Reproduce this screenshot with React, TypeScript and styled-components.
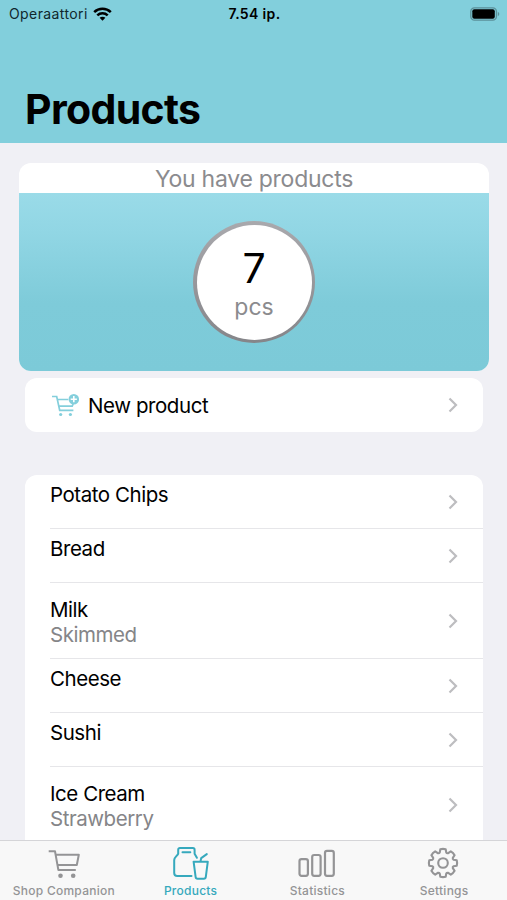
import React from "react";
import styled, { createGlobalStyle } from "styled-components";

const GlobalStyle = createGlobalStyle`
  * { box-sizing: border-box; }
  body {
    margin: 0;
    background: #f0f0f5;
    font-family: Inter, "Liberation Sans", sans-serif;
    color: #000;
  }
`;

const Screen = styled.div`
  display: flex;
  flex-direction: column;
  height: 900px;
  overflow: hidden;
`;

const Header = styled.header`
  flex: none;
  height: 143px;
  background: #82cfdc;
`;

const StatusBar = styled.div`
  display: grid;
  grid-template-columns: 1fr auto 1fr;
  align-items: center;
  height: 27px;
  padding: 0 7px 0 9px;
  font-size: 14px;
  svg { display: block; }
`;

const Carrier = styled.span`
  display: flex;
  align-items: center;
  gap: 5px;
  color: #10272c;
  letter-spacing: 0.4px;
`;

const Clock = styled.span`
  font-weight: 600;
  letter-spacing: 0.35px;
`;

const BatterySlot = styled.span`
  justify-self: end;
`;

const Title = styled.h1`
  margin: 57px 0 0 25px;
  font-size: 41px;
  line-height: 50px;
  font-weight: 700;
  letter-spacing: -0.65px;
`;

const Content = styled.main`
  flex: 1;
  min-height: 0;
  overflow: hidden;
  padding: 20px 19px 0;
`;

const Summary = styled.section`
  height: 208px;
  width: 470px;
  border-radius: 12px;
  overflow: hidden;
  background: #fff;
`;

const SummaryTitle = styled.div`
  height: 30px;
  line-height: 32px;
  text-align: center;
  font-size: 23px;
  letter-spacing: -0.26px;
  color: #8b8b8e;
`;

const SummaryBody = styled.div`
  height: 178px;
  display: flex;
  align-items: center;
  justify-content: center;
  background: linear-gradient(#9adbe8 0%, #91d6e4 22%, #7ecbd9 62%, #7ccad8 100%);
`;

const Ring = styled.div`
  width: 122px;
  height: 122px;
  padding: 3.5px;
  border-radius: 50%;
  background: linear-gradient(#a9a9ad, #858589);
`;

const Disc = styled.div`
  height: 100%;
  border-radius: 50%;
  background: #fff;
  text-align: center;
  padding-top: 20px;
`;

const Count = styled.div`
  font-size: 41px;
  line-height: 46px;
`;

const Unit = styled.div`
  font-size: 23px;
  line-height: 32px;
  color: #8b8b8e;
`;

const Card = styled.section<{ $gap: number }>`
  margin: ${(p) => p.$gap}px 6px 0;
  width: 458px;
  border-radius: 12px;
  background: #fff;
  overflow: hidden;
`;

const ProductList = styled(Card)`
  border-radius: 12px 12px 0 0;
`;

const ActionRow = styled.div`
  height: 54px;
  padding: 0 25px 0 27px;
  display: flex;
  align-items: center;
  font-size: 20.5px;
  letter-spacing: -0.42px;
  svg { display: block; flex: none; }
`;

const ActionLabel = styled.span`
  flex: 1;
  margin-left: 9px;
`;

const ProductRow = styled.div<{ $tall: boolean }>`
  height: ${(p) => (p.$tall ? 76 : 54)}px;
  margin-left: 25px;
  padding-right: 25px;
  display: flex;
  align-items: center;
  justify-content: space-between;
  border-bottom: 1px solid #e6e6e9;
`;

const ProductText = styled.div<{ $tall: boolean }>`
  align-self: flex-start;
  padding-top: ${(p) => (p.$tall ? 14 : 7)}px;
  font-size: 20.5px;
  line-height: 25px;
  letter-spacing: -0.45px;
`;

const Variant = styled.div`
  color: #858588;
`;

const TabBar = styled.nav`
  flex: none;
  height: 60px;
  border-top: 1px solid #d5d5d8;
  background: #f8f8f8;
  display: grid;
  grid-template-columns: repeat(4, 1fr);
`;

const Tab = styled.div<{ $active?: boolean }>`
  display: flex;
  flex-direction: column;
  align-items: center;
  padding: 4px 0 0 1px;
  color: ${(p) => (p.$active ? "#36a9bd" : "#949496")};
  svg { display: block; }
`;

const TabLabel = styled.span`
  margin-top: 2px;
  font-size: 12px;
  line-height: 16px;
  font-weight: 500;
  letter-spacing: 0.26px;
`;

const Wifi = () => (
  <svg width="19" height="14" viewBox="0 0 19 14" fill="none" stroke="#000" strokeWidth="2.5">
    <path d="M1.2 5.2C5.8 .7 13.2 .7 17.8 5.2" />
    <path d="M4.3 8.4c2.9-2.8 7.5-2.8 10.4 0" />
    <path d="M9.5 13.7L6.6 10.8c1.6-1.5 4.2-1.5 5.8 0z" fill="#000" stroke="none" />
  </svg>
);

const Battery = () => (
  <svg width="30" height="14" viewBox="0 0 30 14">
    <rect x=".8" y=".8" width="25.6" height="12.4" rx="3.6" fill="none" stroke="#5b9099" strokeWidth="1.3" />
    <rect x="2.3" y="2.3" width="22.5" height="9.4" rx="2" fill="#000" />
    <path d="M27.8 4.8c2 .8 2 3.6 0 4.4z" fill="#5b9099" />
  </svg>
);

const Chevron = () => (
  <svg width="10" height="16" viewBox="0 0 10 16" fill="none" stroke="#bdbdc0" strokeWidth="2.2">
    <path d="M1.5 1.5L8 8l-6.5 6.5" />
  </svg>
);

const CartPlus = () => (
  <svg width="27" height="24" viewBox="0 0 27 24" fill="none" stroke="#84cfdc" strokeWidth="1.7">
    <path d="M0 3.5h4.7l3 13.8h13.7M5.2 6.5H16M6.7 13.2h13.5l1-2.2" />
    <circle cx="21.8" cy="6.2" r="5.3" fill="#84cfdc" stroke="none" />
    <path d="M21.8 3.1v6.2M18.7 6.2h6.2" stroke="#fff" strokeWidth="1.6" />
    <circle cx="8.7" cy="21.5" r="1.6" fill="#84cfdc" stroke="none" />
    <circle cx="18.4" cy="21.5" r="1.6" fill="#84cfdc" stroke="none" />
  </svg>
);

const CartIcon = () => (
  <svg width="34" height="36" viewBox="-0.5 0 34 36" fill="none" stroke="currentColor" strokeWidth="2" strokeLinejoin="round">
    <path d="M1.2 6.2h6.3l3.4 18.9h17.4M8.1 9.7h23.2l-2 10.3H10" />
    <circle cx="13" cy="30.7" r="2.3" fill="currentColor" stroke="none" />
    <circle cx="25.7" cy="30.7" r="2.3" fill="currentColor" stroke="none" />
  </svg>
);

const ProductsIcon = () => (
  <svg width="36" height="36" viewBox="0 0.5 36 36" fill="none" stroke="currentColor" strokeWidth="2" strokeLinejoin="round" strokeLinecap="round">
    <path d="M18.5 31.5H4.2a3 3 0 0 1-3-3V15.4c0-2.4 2.7-3.8 4-6.1V5.2A1.7 1.7 0 0 1 6.9 3.5h13a1.7 1.7 0 0 1 1.7 1.7v4.1l2.3 4" />
    <path d="M9.5 7.7h7.8" />
    <path d="M20.6 17.2h14.2l-2 15.2a2 2 0 0 1-2 1.8h-6.2a2 2 0 0 1-2-1.8zM27.5 16.8l.7-3.2 5.6-4" />
  </svg>
);

const StatsIcon = () => (
  <svg width="38" height="36" viewBox="0.5 0 38 36" fill="none" stroke="currentColor" strokeWidth="2.2">
    <rect x="2" y="14.1" width="8.4" height="16.7" rx="2" />
    <rect x="14.7" y="10" width="8.4" height="20.8" rx="2" />
    <rect x="27.5" y="5.9" width="8.8" height="24.9" rx="2" />
  </svg>
);

const teeth = Array.from({ length: 8 }, (_, i) => {
  const point = (r: number, deg: number) => {
    const a = ((deg + i * 45 - 90) * Math.PI) / 180;
    return `${(18 + r * Math.cos(a)).toFixed(2)} ${(18 + r * Math.sin(a)).toFixed(2)}`;
  };
  return `${i ? "L" : "M"}${point(11.1, -17)}L${point(14, -11)}Q${point(14.5, 0)} ${point(14, 11)}L${point(11.1, 17)}Q${point(10.2, 22.5)} ${point(11.1, 28)}`;
}).join("");

const GearIcon = () => (
  <svg width="36" height="36" viewBox="1 0 36 36" fill="none" stroke="currentColor" strokeWidth="2.1" strokeLinejoin="round">
    <path d={`${teeth}Z`} />
    <circle cx="18" cy="18" r="4.8" />
  </svg>
);

const products: { name: string; variant?: string }[] = [
  { name: "Potato Chips" },
  { name: "Bread" },
  { name: "Milk", variant: "Skimmed" },
  { name: "Cheese" },
  { name: "Sushi" },
  { name: "Ice Cream", variant: "Strawberry" },
];

const tabs = [
  { label: "Shop Companion", Icon: CartIcon },
  { label: "Products", Icon: ProductsIcon },
  { label: "Statistics", Icon: StatsIcon },
  { label: "Settings", Icon: GearIcon },
];

export default function App() {
  return (
    <Screen>
      <GlobalStyle />
      <Header>
        <StatusBar>
          <Carrier>Operaattori <Wifi /></Carrier>
          <Clock>7.54 ip.</Clock>
          <BatterySlot><Battery /></BatterySlot>
        </StatusBar>
        <Title>Products</Title>
      </Header>
      <Content>
        <Summary>
          <SummaryTitle>You have products</SummaryTitle>
          <SummaryBody>
            <Ring>
              <Disc>
                <Count>7</Count>
                <Unit>pcs</Unit>
              </Disc>
            </Ring>
          </SummaryBody>
        </Summary>
        <Card $gap={7}>
          <ActionRow>
            <CartPlus />
            <ActionLabel>New product</ActionLabel>
            <Chevron />
          </ActionRow>
        </Card>
        <ProductList $gap={43}>
          {products.map(({ name, variant }) => (
            <ProductRow key={name} $tall={!!variant}>
              <ProductText $tall={!!variant}>
                {name}
                {variant && <Variant>{variant}</Variant>}
              </ProductText>
              <Chevron />
            </ProductRow>
          ))}
        </ProductList>
      </Content>
      <TabBar>
        {tabs.map(({ label, Icon }) => (
          <Tab key={label} $active={label === "Products"}>
            <Icon />
            <TabLabel>{label}</TabLabel>
          </Tab>
        ))}
      </TabBar>
    </Screen>
  );
}
